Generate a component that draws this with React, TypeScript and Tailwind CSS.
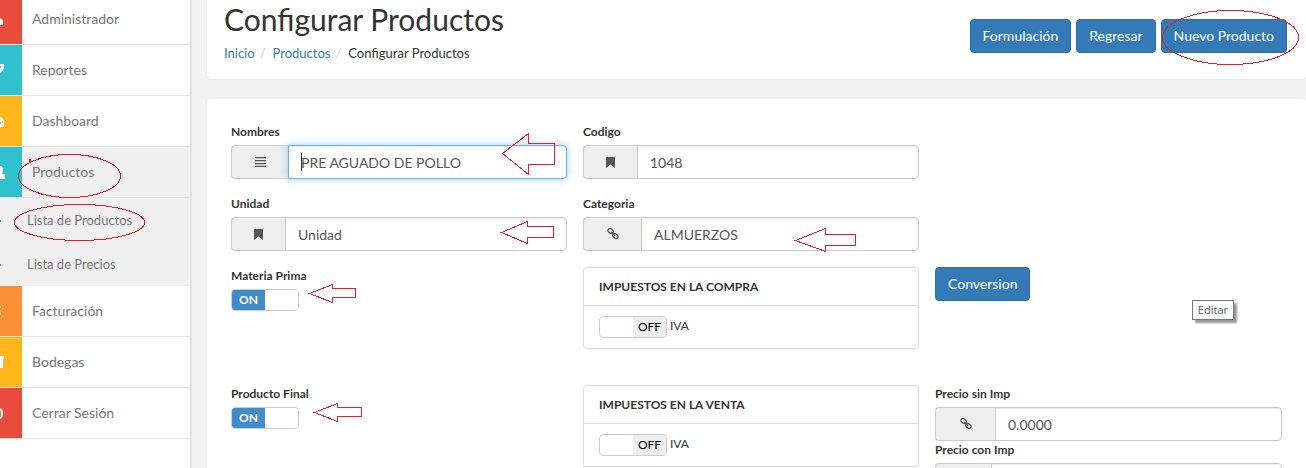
import type { ReactNode } from 'react';

const AlignIcon = () => (
  <svg width="11" height="10" viewBox="0 0 11 10" fill="#555">
    <path d="M0 0h11v1.200H0zM0 3h11v1.200H0zM0 6h11v1.200H0zM0 8.800h11V10H0z" />
  </svg>
);

const BookmarkIcon = () => (
  <svg width="9" height="11" viewBox="0 0 9 11" fill="#555">
    <path d="M1 0h7q1 0 1 1v10L4.500 7.500 0 11V1q0-1 1-1z" />
  </svg>
);

const LinkIcon = () => (
  <svg width="12" height="12" viewBox="0 0 12 12" fill="none" stroke="#555" strokeWidth="1.300">
    <rect x="0.800" y="1" width="5.600" height="4" rx="2" transform="rotate(40 3.600 3)" />
    <rect x="5.600" y="6" width="5.600" height="4" rx="2" transform="rotate(40 8.400 8)" />
    <path d="M4 4l4 3.500" />
  </svg>
);

const menu = [
  { label: 'Administrador', color: 'bg-[#e74c3c]', icon: <path d="M0 24q3 1 3 4v3H0z" /> },
  { label: 'Reportes', color: 'bg-[#2fc1cd]', icon: <path d="M0 19h4v2q0 5-4 7v-3l1-4H0z" /> },
  {
    label: 'Dashboard',
    color: 'bg-[#ffb61c]',
    icon: <path fillRule="evenodd" d="M0 21q4 1 4 6 0 3-1 4H0v-3h1v-2H0zM2 25v1.500h1V25z" />,
  },
  {
    label: 'Productos',
    color: 'bg-[#2fc1cd]',
    active: true,
    children: ['Lista de Productos', 'Lista de Precios'],
    icon: <path d="M0 19q3 0 3 4 0 2-1 4h3v5H0z" />,
  },
  { label: 'Facturación', color: 'bg-[#fa8f35]', icon: <path d="M0 20h1v2H0zM0 25q1 1 1 4H0z" fill="#ffe9a0" /> },
  { label: 'Bodegas', color: 'bg-[#ffb61c]', icon: <path d="M0 19h4v3H3v9H0z" /> },
  {
    label: 'Cerrar Sesión',
    color: 'bg-[#e74c3c]',
    icon: <path d="M0 21q2 1 2 4.500T0 30" fill="none" stroke="#fff" strokeWidth="2" />,
  },
];

const Sidebar = () => (
  <nav className="w-[192px] shrink-0 border-r-2 border-[#e4e4e4] bg-white text-[#777]">
    <ul className="-mt-1.5">
      {menu.map(({ label, color, icon, active, children }) => (
        <li key={label}>
          <a
            href="#"
            className={`flex h-[51px] border-b border-[#e4e4e4] text-sm ${active ? 'bg-[#f0f0f0]' : ''}`}
          >
            <span className={`w-[22px] ${color}`}>
              <svg width="22" height="50" fill="#fff">
                {icon}
              </svg>
            </span>
            <span className="flex items-center pl-2.5">{label}</span>
          </a>
          {children && (
            <ul className="bg-[#f0f0f0]">
              {children.map((child) => (
                <li key={child}>
                  <a href="#" className="flex h-11 items-center pt-0.5 text-[13px]">
                    <span className="h-0.5 w-px bg-[#7f93ad]" />
                    <span className="pl-[26px]">{child}</span>
                  </a>
                </li>
              ))}
            </ul>
          )}
        </li>
      ))}
    </ul>
  </nav>
);

const Button = ({ children }: { children: ReactNode }) => (
  <button
    type="button"
    className="h-[34px] rounded border border-[#2e6da4] bg-[#337ab7] px-3 text-sm text-white"
  >
    {children}
  </button>
);

type FieldProps = {
  id: string;
  label: string;
  value: string;
  icon: ReactNode;
  addon: string;
  focused?: boolean;
};

const Field = ({ id, label, value, icon, addon, focused }: FieldProps) => (
  <div>
    <label htmlFor={id} className="mb-1 block text-xs leading-[18px] font-bold">
      {label}
    </label>
    <div className="flex h-[34px]">
      <span
        className={`flex shrink-0 items-center justify-center rounded-l border border-r-0 border-[#ccc] bg-[#eee] ${addon}`}
      >
        {icon}
      </span>
      <div className="relative flex min-w-0 flex-1">
        <input
          id={id}
          defaultValue={value}
          className={`w-full rounded-r border px-3 pt-0.5 text-sm text-[#555] outline-none ${
            focused
              ? 'border-[#66afe9] shadow-[inset_0_1px_1px_rgba(0,0,0,0.075),0_0_8px_rgba(102,175,233,0.6)]'
              : 'border-[#ccc] shadow-[inset_0_1px_1px_rgba(0,0,0,0.075)]'
          }`}
        />
        {focused && <span className="absolute top-2 left-[13px] h-[18px] w-px bg-[#333]" />}
      </div>
    </div>
  </div>
);

const Toggle = ({ id, on }: { id: string; on?: boolean }) => (
  <span className="relative flex h-[22px] w-[68px] overflow-hidden rounded border border-[#ccc] bg-white text-xs">
    <input
      id={id}
      type="checkbox"
      defaultChecked={on}
      className="peer absolute inset-0 z-10 cursor-pointer opacity-0"
    />
    <span className="flex flex-1 items-center justify-center font-bold text-white peer-checked:bg-[#428bca]">
      {on && 'ON'}
    </span>
    <span className="flex flex-1 items-center justify-center bg-[#eee] text-black peer-checked:bg-white">
      {!on && 'OFF'}
    </span>
  </span>
);

const ToggleField = ({ id, label }: { id: string; label: string }) => (
  <div>
    <label htmlFor={id} className="mb-1 block text-xs leading-[18px] font-bold">
      {label}
    </label>
    <Toggle id={id} on />
  </div>
);

const TaxPanel = ({ id, title, className = '' }: { id: string; title: string; className?: string }) => (
  <section className={`border border-[#ddd] ${className}`}>
    <h2 className="flex h-[38px] items-center border-b border-[#ddd] px-[15px] text-xs font-bold">
      {title}
    </h2>
    <div className="flex gap-[3px] px-[15px] py-2.5">
      <Toggle id={id} />
      <label htmlFor={id} className="text-xs leading-5">
        IVA
      </label>
    </div>
  </section>
);

const Annotations = () => (
  <svg
    className="pointer-events-none absolute top-0 left-0 z-20"
    width="1306"
    height="468"
    fill="none"
    stroke="#ed1c24"
    shapeRendering="crispEdges"
  >
    <ellipse cx="1230.500" cy="37.500" rx="68" ry="27" />
    <ellipse cx="69.500" cy="176" rx="51" ry="21.500" />
    <ellipse cx="79.500" cy="222.500" rx="65" ry="18" />
    <path d="M30 159v3" strokeWidth="2" />
    <path d="M502.500 153.500l26-20v10h26v21h-26v10z" />
    <path d="M501.500 232.500l26-11v5h26v11h-26v6z" />
    <path d="M795.500 240.500l30-12v6h30v11h-30v6z" />
    <path d="M309.500 293.500l23-9v4h23v9h-23v5z" />
    <path d="M314.500 412.500l23-9v4h24v9h-24v5z" />
  </svg>
);

const App = () => (
  <div className="relative flex h-screen overflow-hidden bg-[#f2f2f2] font-['Lato',sans-serif] text-[#333]">
    <Sidebar />
    <main className="flex min-w-0 flex-1 flex-col gap-5 pl-[15px]">
      <header className="flex h-[79px] shrink-0 justify-between rounded-b bg-white pr-[19px] pl-[17px] shadow-[0_1px_1px_rgba(0,0,0,0.05)]">
        <div>
          <h1 className="text-[30px] leading-[38px]">Configurar Productos</h1>
          <ol className="mt-1.5 flex text-[13px] leading-[18px]">
            <li>
              <a href="#" className="text-[#337ab7]">Inicio</a>
              <span className="px-[5px] text-[#ccc]">/</span>
            </li>
            <li className="pl-0.5">
              <a href="#" className="text-[#337ab7]">Productos</a>
              <span className="px-[5px] text-[#ccc]">/</span>
            </li>
            <li className="pl-0.5">Configurar Productos</li>
          </ol>
        </div>
        <div className="mt-[19px] flex gap-[5px]">
          <Button>Formulación</Button>
          <Button>Regresar</Button>
          <Button>Nuevo Producto</Button>
        </div>
      </header>

      <form className="grid shrink-0 grid-cols-[336fr_336fr_347fr] gap-4 rounded-t bg-white p-6">
        <Field id="nombres" label="Nombres" value="PRE AGUADO DE POLLO" icon={<AlignIcon />} addon="w-[57px]" focused />
        <Field id="codigo" label="Codigo" value="1048" icon={<BookmarkIcon />} addon="w-[54px]" />
        <span />
        <Field id="unidad" label="Unidad" value="Unidad" icon={<BookmarkIcon />} addon="w-[54px]" />
        <Field id="categoria" label="Categoria" value="ALMUERZOS" icon={<LinkIcon />} addon="w-[58px]" />
        <span />
        <ToggleField id="materia-prima" label="Materia Prima" />
        <TaxPanel id="iva-compra" title="IMPUESTOS EN LA COMPRA" className="mb-5 rounded" />
        <div>
          <Button>Conversion</Button>
        </div>
        <ToggleField id="producto-final" label="Producto Final" />
        <div>
          <TaxPanel id="iva-venta" title="IMPUESTOS EN LA VENTA" className="rounded-t" />
        </div>
        <div>
          <Field id="precio-sin" label="Precio sin Imp" value="0.0000" icon={<LinkIcon />} addon="w-[60px]" />
          <Field id="precio-con" label="Precio con Imp" value="0.0000" icon={<LinkIcon />} addon="w-[56px]" />
        </div>
      </form>
    </main>
    <div
      role="tooltip"
      className="absolute top-[300px] right-[72px] z-10 border border-[#767676] bg-white px-[5px] font-['Open_Sans',sans-serif] text-[11px] leading-[18px] text-[#575757] shadow-[3px_3px_2px_#999]"
    >
      Editar
    </div>
    <Annotations />
  </div>
);

export default App;
